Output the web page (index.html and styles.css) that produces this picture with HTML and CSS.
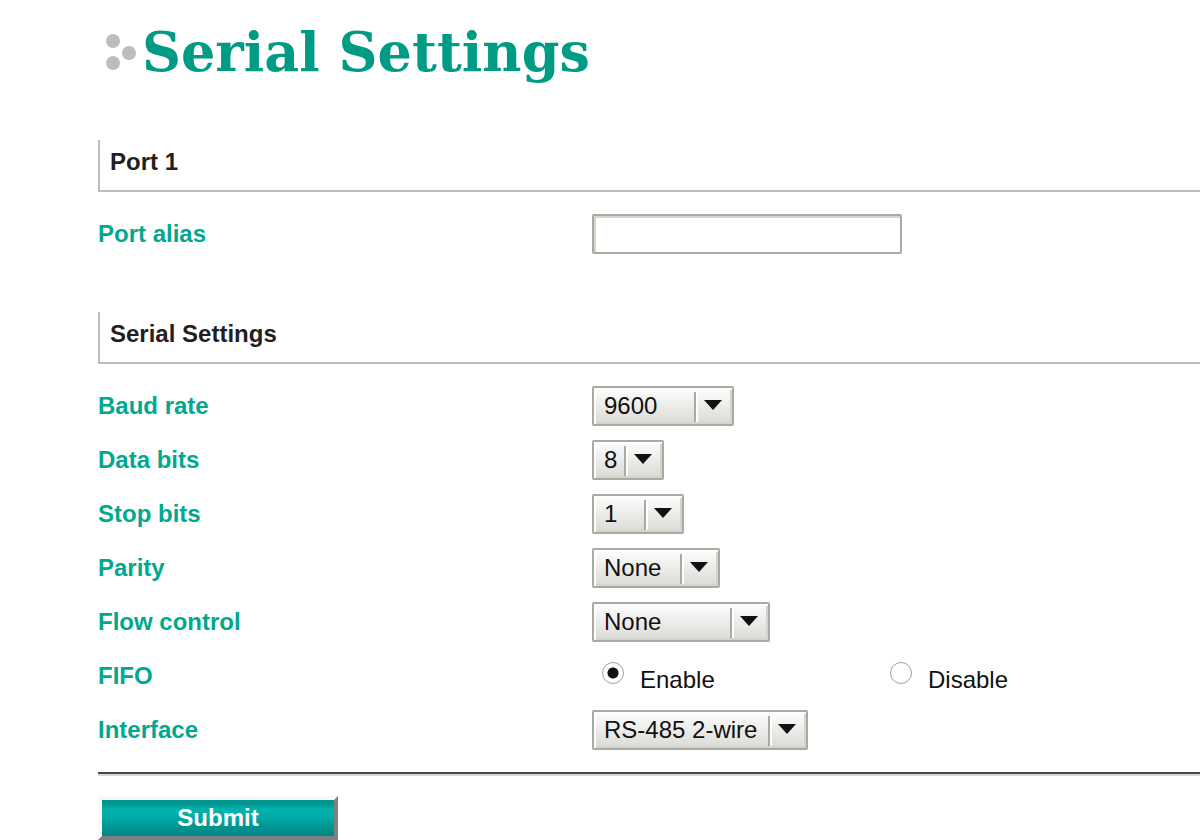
FILE: index.html
```html
<!DOCTYPE html>
<html lang="en">
<head>
<meta charset="utf-8">
<title>Serial Settings</title>
<link rel="stylesheet" href="styles.css">
</head>
<body>
<main class="page">
  <header class="title-bar">
    <svg class="title-mark" viewBox="0 0 30 38" aria-hidden="true">
      <circle cx="7" cy="8" r="7"/>
      <circle cx="23" cy="20" r="7"/>
      <circle cx="7" cy="30" r="7"/>
    </svg>
    <h1 class="title">Serial Settings</h1>
  </header>
  <form class="form">
    <section class="group">
      <h2 class="group-title">Port 1</h2>
      <div class="row">
        <label class="label" for="alias">Port alias</label>
        <input class="text-box" id="alias" type="text">
      </div>
    </section>
    <section class="group">
      <h2 class="group-title">Serial Settings</h2>
      <div class="row">
        <label class="label" for="baud">Baud rate</label>
        <span class="picker picker-baud"><select class="select" id="baud"><option>9600</option></select></span>
      </div>
      <div class="row">
        <label class="label" for="data">Data bits</label>
        <span class="picker picker-data"><select class="select" id="data"><option>8</option></select></span>
      </div>
      <div class="row">
        <label class="label" for="stop">Stop bits</label>
        <span class="picker picker-stop"><select class="select" id="stop"><option>1</option></select></span>
      </div>
      <div class="row">
        <label class="label" for="parity">Parity</label>
        <span class="picker picker-parity"><select class="select" id="parity"><option>None</option></select></span>
      </div>
      <div class="row">
        <label class="label" for="flow">Flow control</label>
        <span class="picker picker-flow"><select class="select" id="flow"><option>None</option></select></span>
      </div>
      <div class="row" role="radiogroup" aria-labelledby="fifo-label">
        <span class="label" id="fifo-label">FIFO</span>
        <div class="radios">
          <label class="choice"><input class="radio" type="radio" name="fifo" checked><span class="choice-text">Enable</span></label>
          <label class="choice"><input class="radio" type="radio" name="fifo"><span class="choice-text">Disable</span></label>
        </div>
      </div>
      <div class="row">
        <label class="label" for="interface">Interface</label>
        <span class="picker picker-interface"><select class="select" id="interface"><option>RS-485 2-wire</option></select></span>
      </div>
    </section>
    <hr class="rule">
    <button class="submit" type="submit">Submit</button>
  </form>
</main>
</body>
</html>
```

FILE: styles.css
```css
* {
  box-sizing: border-box;
}

body {
  margin: 0;
  background: #fff;
  color: #111;
  font: 24px/28px "Liberation Sans", Arial, sans-serif;
}

.page {
  padding: 20px 0 0 98px;
}

.title-bar {
  display: flex;
  align-items: center;
  gap: 6px;
  height: 64px;
  padding-left: 8px;
}

.title-mark {
  width: 30px;
  height: 38px;
  fill: #bdbdbd;
}

.title {
  margin: 0;
  color: #009b84;
  font: bold 54px/64px "DejaVu Serif", serif;
}

.form {
  padding-top: 56px;
}

.group + .group {
  margin-top: 51px;
}

.group-title {
  height: 52px;
  margin: 0 0 15px;
  padding: 8px 0 0 10px;
  border-left: 2px solid #bdbdbd;
  border-bottom: 2px solid #bdbdbd;
  color: #231f20;
  font-size: 24px;
  line-height: 28px;
}

.row {
  display: grid;
  grid-template-columns: 494px 1fr;
  align-items: center;
  justify-items: start;
  height: 54px;
}

.label {
  color: #00a88f;
  font-weight: bold;
}

.text-box {
  width: 310px;
  height: 40px;
  padding: 0 10px;
  border: 2px solid #a9aaa1;
  border-radius: 2px;
  box-shadow: inset 2px 2px #d6d7d0;
  background: #fff;
  font: inherit;
}

.picker {
  position: relative;
  display: block;
}

.picker-baud { width: 142px; }
.picker-data { width: 72px; }
.picker-stop { width: 92px; }
.picker-parity { width: 128px; }
.picker-flow { width: 178px; }
.picker-interface { width: 216px; }

.select {
  display: block;
  appearance: none;
  width: 100%;
  height: 40px;
  padding: 0 40px 0 10px;
  border: 2px solid #a9aaa1;
  border-radius: 2px;
  box-shadow: inset 2px 2px #fff, inset -2px -2px #d3d4ce;
  background: linear-gradient(#fdfdfd, #dadbd6);
  color: #111;
  font: inherit;
}

.picker::before {
  content: "";
  position: absolute;
  top: 6px;
  right: 36px;
  width: 4px;
  height: 30px;
  background: linear-gradient(to right, #a9aaa1 50%, #fff 50%);
  pointer-events: none;
}

.picker::after {
  content: "";
  position: absolute;
  top: 14px;
  right: 12px;
  width: 18px;
  height: 10px;
  background: #111;
  clip-path: polygon(0 0, 100% 0, 50% 100%);
  pointer-events: none;
}

.radios {
  display: grid;
  grid-template-columns: 288px auto;
  padding: 4px 0 0 10px;
}

.choice {
  display: flex;
  gap: 16px;
}

.radio {
  appearance: none;
  width: 22px;
  height: 22px;
  margin: 0;
  border: 1px solid #a0a198;
  border-radius: 50%;
  background: #fff;
}

.radio:checked {
  background: radial-gradient(circle, #111 5px, #fff 6px);
}

.choice-text {
  padding-top: 4px;
}

.rule {
  height: 4px;
  margin: 15px 0 20px;
  border: 0;
  border-top: 2px solid #484848;
  background: #d8d8d8;
}

.submit {
  display: block;
  width: 240px;
  height: 44px;
  padding: 0;
  border: 4px solid;
  border-color: #f8f8f8 #808080 #808080 #f8f8f8;
  background: linear-gradient(#009690 0 12%, #00b3b0 26%, #00aaa7 50%, #009490 75%, #008987);
  color: #fff;
  font: bold 24px/28px "Liberation Sans", Arial, sans-serif;
}
```
